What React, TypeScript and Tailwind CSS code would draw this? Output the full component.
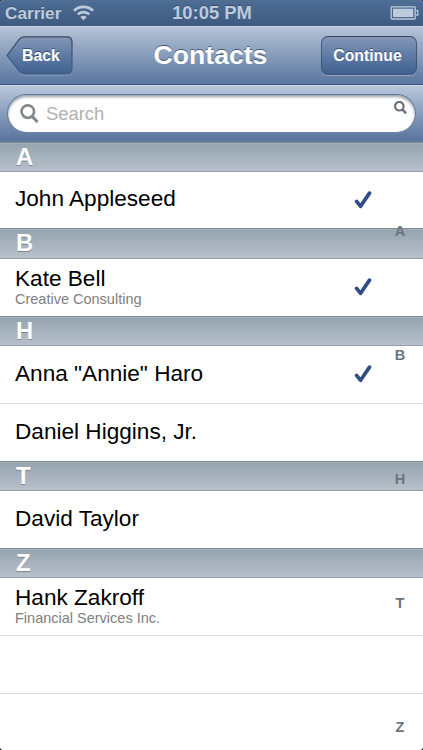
type Contact = {
  name: string;
  company?: string;
  selected?: boolean;
  height: string;
};

type Section = {
  letter: string;
  height: string;
  contacts: Contact[];
};

const sections: Section[] = [
  {
    letter: "A",
    height: "h-[30px]",
    contacts: [{ name: "John Appleseed", selected: true, height: "h-[56px]" }],
  },
  {
    letter: "B",
    height: "h-[31px]",
    contacts: [
      {
        name: "Kate Bell",
        company: "Creative Consulting",
        selected: true,
        height: "h-[57px]",
      },
    ],
  },
  {
    letter: "H",
    height: "h-[30px]",
    contacts: [
      { name: 'Anna "Annie" Haro', selected: true, height: "h-[58px]" },
      { name: "Daniel Higgins, Jr.", height: "h-[57px]" },
    ],
  },
  {
    letter: "T",
    height: "h-[30px]",
    contacts: [{ name: "David Taylor", height: "h-[57px]" }],
  },
  {
    letter: "Z",
    height: "h-[30px]",
    contacts: [
      {
        name: "Hank Zakroff",
        company: "Financial Services Inc.",
        height: "h-[58px]",
      },
    ],
  },
];

function SearchIcon({
  className,
  bold = false,
}: {
  className: string;
  bold?: boolean;
}) {
  return (
    <svg viewBox="0 0 20 20" className={className} fill="none" stroke="currentColor">
      <circle cx="8.2" cy="8" r="6.6" strokeWidth={bold ? 3.4 : 2.8} />
      <path d="M12.8 13 18.5 19" strokeWidth={bold ? 4 : 3.2} />
    </svg>
  );
}

function CheckIcon() {
  return (
    <svg viewBox="0 0 18 19" className="h-[19px] w-[18px]" fill="none" stroke="#304d86">
      <path
        d="M2.6 10.4 6.6 15.3 15.5 2.1"
        strokeWidth="3.7"
        strokeLinecap="round"
        strokeLinejoin="round"
      />
    </svg>
  );
}

function StatusBar() {
  return (
    <div className="flex h-[26px] shrink-0 items-center justify-between bg-linear-to-b from-[#4f6e95] to-[#3e5a80] pr-1 pl-[5px] font-bold text-[#bdcbdc] [text-shadow:0_-1px_0_#36506f]">
      <div className="flex w-[120px] items-center gap-[11px]">
        <span className="w-[57px] text-[17.2px] leading-[26px]">Carrier</span>
        <svg viewBox="0 0 21 16" className="h-4 w-[21px]" fill="none" stroke="#bdcbdc">
          <path d="M1 5.7C6.3.6 14.7.6 20 5.7" strokeWidth="2.6" />
          <path d="M4.7 9.4c3.3-3 8.3-3 11.6 0" strokeWidth="2.6" />
          <path d="M10.5 15.2 7.3 12c1.8-1.6 4.6-1.6 6.4 0Z" fill="#bdcbdc" stroke="none" />
        </svg>
      </div>
      <span className="text-[18.4px] leading-[26px]">10:05 PM</span>
      <div className="flex w-[120px] justify-end">
        <svg viewBox="0 0 29 14" className="h-3.5 w-[29px]" fill="none" stroke="#bdcbdc">
          <rect x="1.2" y=".8" width="24" height="12.2" rx=".8" strokeWidth="1.3" />
          <rect x="3" y="2.7" width="20.3" height="8.4" fill="#bdcbdc" stroke="none" />
          <path d="M25.8 4.6h2v4.6h-2" strokeWidth="1.2" />
        </svg>
      </div>
    </div>
  );
}

function BackButton() {
  return (
    <button className="relative h-10 w-[67px] pl-[3px] text-[15.8px] font-bold text-white [text-shadow:0_-1px_0_#38506f]">
      <svg viewBox="0 0 67 40" className="absolute inset-0 h-10 w-[67px]" fill="none">
        <defs>
          <linearGradient id="back-fill" x1="0" y1="0" x2="0" y2="1">
            <stop offset="0" stopColor="#8497b6" />
            <stop offset=".5" stopColor="#5f7ba5" />
            <stop offset="1" stopColor="#40608f" />
          </linearGradient>
          <linearGradient id="back-edge" x1="0" y1="0" x2="0" y2="1">
            <stop offset="0" stopColor="#39475d" />
            <stop offset="1" stopColor="#3f5b87" />
          </linearGradient>
        </defs>
        <path
          d="M1 20.6 12.2 5.6Q15 1.9 18.5 1.9H61q5 0 5 5v27q0 5-5 5H18.5q-3.5 0-6.3-3.7Z"
          stroke="#91a6c4"
        />
        <path
          d="M1 19.6 12.2 4.6Q15 .9 18.5.9H61q5 0 5 5v27q0 5-5 5H18.5q-3.5 0-6.3-3.7Z"
          fill="url(#back-fill)"
          stroke="url(#back-edge)"
          strokeWidth="1.2"
        />
      </svg>
      <span className="relative">Back</span>
    </button>
  );
}

function NavBar() {
  return (
    <div className="flex h-[59px] shrink-0 items-center justify-between border-t border-b border-t-[#cbd6e3] border-b-[#38547f] bg-linear-to-b from-[#b5c3d6] to-[#5a769f] px-[6px]">
      <div className="flex w-[94px]">
        <BackButton />
      </div>
      <h1 className="text-[26.6px] font-bold text-white [text-shadow:0_-1px_0_#465a78]">
        Contacts
      </h1>
      <button className="h-[39px] w-[96px] rounded-[7px] border border-[#3f567c] border-t-[#39475d] bg-linear-to-b from-[#8497b6] via-[#5f7ba5] to-[#40608f] pr-[3px] text-[15.8px] font-bold text-white shadow-[0_1px_0_#91a6c4] [text-shadow:0_-1px_0_#38506f]">
        Continue
      </button>
    </div>
  );
}

function SearchBar() {
  return (
    <div className="h-[57px] shrink-0 border-t border-b border-t-[#cbd5e4] border-b-[#6b7f9d] bg-linear-to-b from-[#b9c8dc] to-[#58739d] px-[7px] pt-2">
      <div className="flex h-[39px] items-center gap-[7px] rounded-full border border-[#5f7898] border-b-[#6b84a8] bg-white pl-[12px] shadow-[inset_0_2px_3px_#9b9fa5]">
        <SearchIcon className="h-[19px] w-[19px] text-[#83888e]" />
        <span className="text-[18.4px] text-[#b1b1b1]">Search</span>
      </div>
    </div>
  );
}

function SectionHeader({ letter, height }: { letter: string; height: string }) {
  return (
    <div
      className={`${height} border-t border-b border-t-[#7d8a95] border-b-[#98a1aa] bg-linear-to-b from-[#95a4af] to-[#b7bfca] pl-4 text-[23.8px] leading-[28px] font-bold text-white shadow-[inset_0_1px_0_#a4b0ba] [text-shadow:0_1px_0_#7d858f]`}
    >
      {letter}
    </div>
  );
}

function ContactRow({ contact, last }: { contact: Contact; last: boolean }) {
  return (
    <div
      className={`${contact.height} flex items-center justify-between pr-[51px] pl-[15px] ${
        last ? "" : "border-b border-[#dcdcdc]"
      }`}
    >
      <div className={contact.company ? "" : "pb-0.5"}>
        <p
          className={`text-[22.6px] text-black ${
            contact.company ? "leading-[23px]" : "leading-[28px]"
          }`}
        >
          {contact.name}
        </p>
        {contact.company && (
          <p className="text-[14.5px] leading-[19px] text-[#808080]">{contact.company}</p>
        )}
      </div>
      {contact.selected && <CheckIcon />}
    </div>
  );
}

function SectionIndex() {
  return (
    <div className="absolute top-[99px] right-[13px] flex h-[636px] w-5 flex-col items-center justify-between text-[14.5px] leading-4 font-bold text-[#6b737d]">
      <span className="flex h-4 items-center">
        <SearchIcon bold className="h-[13px] w-[13px]" />
      </span>
      {sections.map((section) => (
        <span key={section.letter}>{section.letter}</span>
      ))}
    </div>
  );
}

export default function App() {
  return (
    <div className="bg-black">
      <div className="relative flex h-[750px] w-[423px] flex-col overflow-hidden rounded-[3px] bg-white font-['Liberation_Sans',Arial,sans-serif]">
        <StatusBar />
        <NavBar />
        <SearchBar />
        <div>
          {sections.map((section, index) => (
            <section key={section.letter}>
              <SectionHeader letter={section.letter} height={section.height} />
              {section.contacts.map((contact, i) => (
                <ContactRow
                  key={contact.name}
                  contact={contact}
                  last={i === section.contacts.length - 1 && index < sections.length - 1}
                />
              ))}
            </section>
          ))}
          <div className="h-[58px] border-b border-[#dcdcdc]" />
        </div>
        <SectionIndex />
      </div>
    </div>
  );
}
